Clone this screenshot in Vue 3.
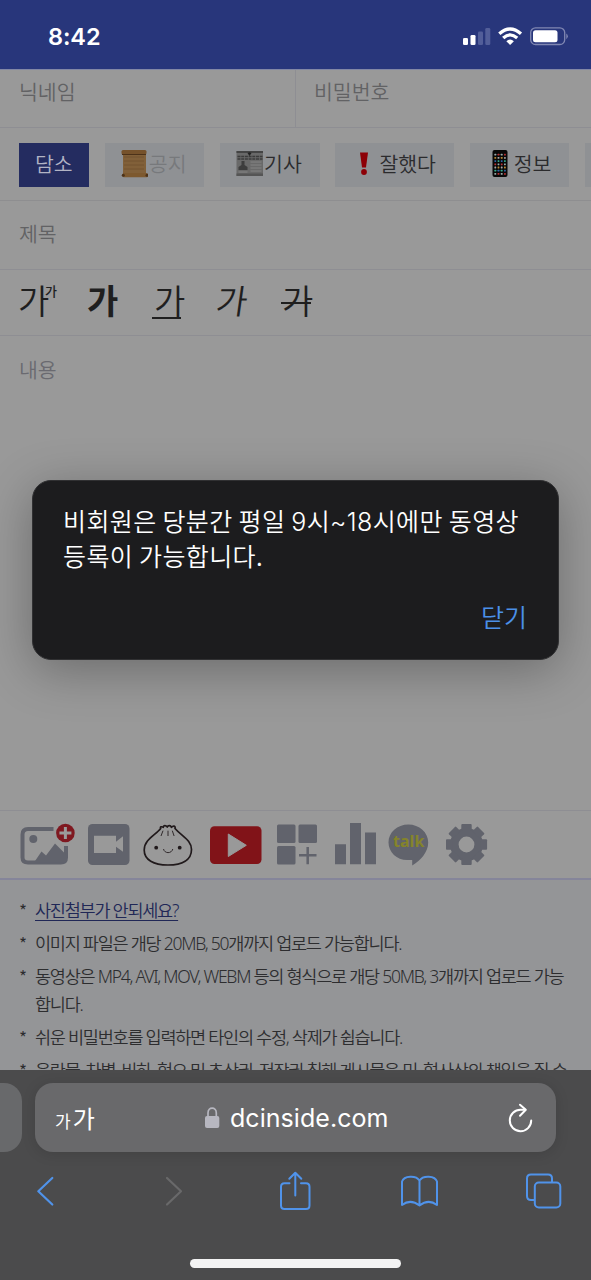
<script setup>
const gearTeeth = [0, 45, 90, 135, 180, 225, 270, 315]
const notices = [
  { text: '사진첨부가 안되세요?', link: true },
  { text: '이미지 파일은 개당 20MB, 50개까지 업로드 가능합니다.' },
  { text: '동영상은 MP4, AVI, MOV, WEBM 등의 형식으로 개당 50MB, 3개까지 업로드 가능', more: '합니다.' },
  { text: '쉬운 비밀번호를 입력하면 타인의 수정, 삭제가 쉽습니다.' },
  { text: '음란물, 차별, 비하, 혐오 및 초상권, 저작권 침해 게시물은 민, 형사상의 책임을 질 수' },
]
const leds = []
const ledColors = ['#9aa', '#3a8', '#a9a9a9', '#b33', '#36a', '#b83']
for (let r = 0; r < 7; r++) for (let c = 0; c < 4; c++) leds.push({ x: 494.4 + c * 3.2, y: 153.8 + r * 3.2, f: ledColors[(r * 5 + c * 3) % 6] })
</script>

<template>
  <div class="phone">
    <header class="status">
      <span class="clock">8:42</span>
      <svg class="signals" width="106" height="20" viewBox="463 27 106 20">
        <rect x="463" y="38" width="5" height="7" rx="1.3" fill="#fff" />
        <rect x="470.5" y="35" width="5" height="10" rx="1.3" fill="#fff" />
        <rect x="478" y="31.500" width="5" height="13.500" rx="1.3" fill="#525e99" />
        <rect x="485.300" y="28" width="5" height="17" rx="1.3" fill="#525e99" />
        <g fill="none" stroke="#fff" stroke-width="3.300">
          <path d="M499.300 33.700Q510 24.200 521 33.700" />
          <path d="M503.200 38Q510 31.700 517.200 38" />
        </g>
        <path d="M506.300 41.300Q510.100 37.800 513.900 41.300L510.100 44.900Z" fill="#fff" />
        <rect x="530.700" y="27.800" width="34" height="16.700" rx="4.800" fill="none" stroke="#8087b2" stroke-width="1.300" />
        <rect x="533" y="30.200" width="24.500" height="12" rx="2.500" fill="#fff" />
        <path d="M566.300 33.500q3 2.700 0 5.700z" fill="#8087b2" />
      </svg>
    </header>

    <main class="page">
      <div class="login">
        <div class="field">닉네임</div>
        <div class="field second">비밀번호</div>
      </div>
      <nav class="tabs">
        <span class="tab on">담소</span>
        <span class="tab muted">
          <svg width="27" height="30" viewBox="121 149 27 30">
            <path d="M123 152h23v24h-23z" fill="#816039" />
            <path d="M124 157h20M124 161h20M124 165h20M124 169h20" stroke="#735330" stroke-width="1" />
            <rect x="121.500" y="150" width="25" height="4.500" rx="1.500" fill="#76522b" />
            <path d="M122 154.500h24" stroke="#4c3219" />
            <rect x="122.500" y="173" width="25.500" height="4.300" rx="1.500" fill="#7d592f" />
            <circle cx="123.300" cy="175.300" r="1.500" fill="#4c3219" /><circle cx="147" cy="175.300" r="1.500" fill="#4c3219" />
          </svg>공지</span>
        <span class="tab">
          <svg width="27" height="30" viewBox="236.500 149 27 30">
            <rect x="237" y="151" width="27" height="25" fill="#696969" />
            <path d="M237 151h27v2h-27z" fill="#444" />
            <path d="M238 156.500h25M238 159h25" stroke="#3b3b3b" stroke-width="1.500" stroke-dasharray="3 .700" />
            <path d="m248 153 2-.7 2 .7-2 3z" fill="#222" />
            <path d="M239 170v-3l3-2v-4h3v4l3 2v3z" fill="#3d3d3d" />
            <path d="M251 162h11M251 165h11M251 168h11M251 171h11M239 172h9" stroke="#858585" />
            <path d="M237 173.500h27v2.500h-27z" fill="#555" />
          </svg>기사</span>
        <span class="tab wide">
          <svg width="27" height="30" viewBox="352 149 27 30">
            <path d="M361 152.500h8l-2 15h-4z" fill="#8d0007" /><circle cx="365" cy="172" r="2.900" fill="#8d0007" />
          </svg>잘했다</span>
        <span class="tab">
          <svg width="27" height="30" viewBox="486.500 149 27 30">
            <rect x="493" y="150" width="15" height="27" rx="2" fill="#080808" />
            <rect v-for="(l, i) in leds" :key="i" :x="l.x + .5" :y="l.y" width="1.800" height="1.800" rx=".400" :fill="l.f" />
          </svg>정보</span>
        <span class="tab stub"></span>
      </nav>
      <div class="subject">제목</div>
      <div class="format">
        <span class="f size">가<small>가</small></span>
        <span class="f bold">가</span>
        <span class="f under">가</span>
        <span class="f ital">가</span>
        <span class="f strike">가</span>
      </div>
      <div class="content">내용</div>

      <div class="tools">
        <svg width="56" height="46" viewBox="20 821 56 46">
          <path d="M53.500 829H28q-5.500 0-5.500 5.500v23q0 5 5.500 5h33q5 0 5-5V846" fill="none" stroke="#61636c" stroke-width="4" />
          <circle cx="33.300" cy="839" r="4" fill="#61636c" />
          <path d="M34 862.500 41.500 851.500 46 855.500 55 843.500 66 854.500V862.500Z" fill="#61636c" />
          <circle cx="65.400" cy="833" r="9.300" fill="#7f1820" />
          <path d="M65.400 827v12M59.400 833h12" stroke="#9b9b9b" stroke-width="3" />
        </svg>
        <svg class="video" width="42" height="46" viewBox="88 821 42 46">
          <rect x="88" y="824" width="41.500" height="41" rx="4.500" fill="#61636c" />
          <path d="M94 835.700h22v6l7-5.500v15.500l-7-5v6.300H94z" fill="#999" />
        </svg>
        <svg class="bun" width="50" height="46" viewBox="143 821 50 46">
          <path d="M160.700 828.500c-5 6.500-16.500 11-16.500 21.500 0 10 9.500 15 23.800 15s23.500-5 23.500-15.500c0-9.500-9.500-13-16.500-21 .800-3-2-3-3.500-1.200-1-2.300-3.500-2.300-4.200-.300-1.500-2-4-1.800-4 .300-2-1-3.500-.500-2.600 1.200Z" fill="none" stroke="#20191b" stroke-width="1.700" stroke-linejoin="round" />
          <path d="M163 830.700 161 836M168 830.700V836M172.300 830.700l1.800 5.300M163.500 849c1 4.700 8 5 9.300 0" fill="none" stroke="#30292b" stroke-width="1" />
          <circle cx="156.200" cy="847.700" r="1.900" fill="#20191b" /><circle cx="179.700" cy="847.700" r="1.900" fill="#20191b" />
        </svg>
        <svg class="tube" width="52" height="46" viewBox="210 821 52 46">
          <rect x="210" y="826.300" width="51.500" height="37.700" rx="4.500" fill="#811318" />
          <path d="M228.300 834v22.500l18-11.200z" fill="#999" stroke="#999" stroke-linejoin="round" />
        </svg>
        <svg class="blocks" width="40" height="46" viewBox="277 821 40 46" fill="#61636c">
          <rect x="277" y="824.500" width="18.500" height="18.500" rx="1.500" /><rect x="298.500" y="824.500" width="18.500" height="18.500" rx="1.500" /><rect x="277" y="846" width="18.500" height="18.500" rx="1.500" />
          <path d="M307.700 847v17.300M299 855.300h17.500" stroke="#61636c" stroke-width="2.500" />
        </svg>
        <svg class="chart" width="42" height="46" viewBox="335 821 42 46" fill="#61636c">
          <path d="M335 844.300h11V864.200H335zM350 823h11V864.200H350zM365 832.500h11V864.200H365z" />
        </svg>
        <div class="talk">
          <svg width="41" height="46" viewBox="388 821 41 46">
            <path d="M408.300 824.500c-11 0-19.800 7.800-19.800 18 0 9.700 8.300 17.500 18.700 17.500h5v5.500c8-5 16-13 16-23 0-10.200-8.900-18-19.900-18Z" fill="#61636c" />
          </svg><b>talk</b>
        </div>
        <svg class="gear" width="42" height="46" viewBox="446 821 42 46" fill="#61636c">
          <circle cx="466.500" cy="844.500" r="12.200" fill="none" stroke="#61636c" stroke-width="8.600" />
          <rect v-for="a in gearTeeth" :key="a" x="461.300" y="823.900" width="10.400" height="7" rx="1" :transform="`rotate(${a} 466.500 844.500)`" />
        </svg>
      </div>

      <ul class="notices">
        <li v-for="(n, i) in notices" :key="i">
          <span class="star">*</span>
          <span :class="['txt', 'n' + i, { link: n.link }]">{{ n.text }}<template v-if="n.more"><br>{{ n.more }}</template></span>
        </li>
      </ul>
    </main>

    <footer class="safari">
      <div class="bar">
        <div class="prev"></div>
        <div class="address">
          <span class="aa"><small>가</small>가</span>
          <span class="host">
            <svg width="15" height="22" viewBox="205 1107 15 22">
              <rect x="205" y="1116" width="14.300" height="12" rx="2" fill="#b7b7c0" />
              <path d="M208 1116.500v-3.500c0-6.500 8.300-6.500 8.300 0v3.500" fill="none" stroke="#b7b7c0" stroke-width="1.700" />
            </svg>
            <span>dcinside.com</span>
          </span>
          <svg class="reload" width="26" height="30" viewBox="509 1102 26 30" fill="none" stroke="#fff" stroke-width="2" stroke-linecap="round" stroke-linejoin="round">
            <path d="M526 1108.800H521.700A10.700 10.700 0 1 0 532.200 1119.500" />
            <path d="M521 1103.700 526.800 1108.800 521 1114.700" />
          </svg>
        </div>
      </div>
      <div class="actions">
        <svg width="19" height="40" viewBox="36 1171.500 19 40" fill="none" stroke="#5093ea" stroke-width="2.200" stroke-linecap="round" stroke-linejoin="round"><path d="M52.300 1178.500 38.300 1191.700 52.300 1205" /></svg>
        <svg class="fwd" width="19" height="40" viewBox="164 1171.500 19 40" fill="none" stroke="#69696a" stroke-width="2.200" stroke-linecap="round" stroke-linejoin="round"><path d="M167 1178.500 181 1191.700 167 1205" /></svg>
        <svg class="share" width="32" height="40" viewBox="279 1171 32 40" fill="none" stroke="#5093ea" stroke-width="2" stroke-linecap="round" stroke-linejoin="round">
          <path d="M289.500 1183.300h-5q-3.500 0-3.500 3.500v18.700q0 3.500 3.500 3.500h21.500q3.500 0 3.500-3.500v-18.700q0-3.500-3.500-3.500h-5M295.300 1195.500V1173M289.300 1178.700l6-6 6 6" />
        </svg>
        <svg class="book" width="40" height="40" viewBox="399 1171.500 40 40" fill="none" stroke="#5093ea" stroke-width="2" stroke-linejoin="round">
          <path d="M419.500 1181v25q-9-7-17.500-.500V1182c2-6 14-6.500 17.500-1 3.500-5.500 15.500-5 17.500 1v23.500q-8.500-6.500-17.500.500" />
        </svg>
        <svg class="pages" width="37" height="40" viewBox="525 1171.500 37 40" fill="none" stroke="#5093ea" stroke-width="2">
          <path d="M534.500 1200.500H531q-4 0-4-4v-17.500q0-4 4-4h17q4 0 4 4v3.500" />
          <rect x="534.800" y="1183" width="25.500" height="25" rx="4" />
        </svg>
      </div>
      <div class="home"></div>
    </footer>

    <section class="dialog">
      <p>비회원은 당분간 평일 <i>9</i>시<i>~18</i>시에만 동영상<br>등록이 가능합니다.</p>
      <button>닫기</button>
    </section>
  </div>
</template>

<style>
body { margin: 0; background: #999; }
</style>
<style scoped>
* { box-sizing: border-box; }
svg { display: block; flex: none; }
.phone { position: relative; width: 591px; height: 1280px; overflow: hidden; display: flex; flex-direction: column; background: #999; font-family: "Noto Sans CJK KR", "Noto Sans", sans-serif; font-weight: 350; color: #2d2d2f; }
.status { flex: none; height: 69px; background: #28367b; display: flex; justify-content: space-between; padding: 0 22px 0 48px; }
.clock { font: 600 23.500px/30px Inter, sans-serif; color: #fff; margin-top: 22px; letter-spacing: -.1px; }
.signals { margin-top: 27px; }
.page { height: 1001px; flex: none; overflow: hidden; }
.login { display: flex; height: 59px; border-top: 1px solid #8287a5; border-bottom: 1px solid #8e8e93; color: #626264; }
.field { width: 295px; padding-left: 19px; font-size: 20.500px; line-height: 42px; }
.second { width: 296px; padding-left: 18px; border-left: 1px solid #8e8e93; }
.tabs { display: flex; gap: 15.800px; height: 73px; padding: 15px 0 0 19px; border-bottom: 1px solid #8e8e90; overflow: hidden; }
.tab { flex: none; width: 99.500px; height: 44px; background: #8f9194; display: flex; align-items: center; padding: 0 0 4px 16px; font-size: 20.500px; line-height: 40px; color: #2b2b2d; white-space: nowrap; }
.tab svg { margin-right: 1px; margin-top: 2px; }
.tab.on { width: 70px; background: #242c60; color: #b2b4c5; }
.tab.muted { color: #77797c; }
.tab.wide { width: 118.500px; }
.subject { height: 69px; padding-left: 19px; font-size: 20.500px; line-height: 65px; color: #626264; border-bottom: 1px solid #8e8e93; }
.format { height: 66px; display: flex; padding-left: 18px; border-bottom: 1px solid #8e8e93; color: #1f1f1f; font-size: 34px; line-height: 60px; }
.f { width: 68px; position: relative; flex: none; }
.size small { position: absolute; left: 27px; top: -9px; font-size: 13px; line-height: 60px; font-weight: 500; }
.bold { font-weight: 700; padding-left: 1px; }
.under::after, .strike::after { content: ""; position: absolute; left: -2px; top: 47px; width: 29px; height: 2px; background: #1f1f1f; }
.ital { width: 60px; transform: translateX(-6px) skewX(-8deg); }
.strike::after { top: 32px; width: 30px; left: -1px; }
.content { height: 475px; padding: 1px 0 0 19px; font-size: 20.500px; line-height: 64px; color: #6a6a70; border-bottom: 1px solid #8e8e93; }
.tools { height: 67px; display: flex; padding: 10px 0 0 20px; }
.video { margin-left: 12px; }
.bun { margin-left: 13px; }
.tube { margin-left: 17px; }
.blocks { margin-left: 15px; }
.chart { margin-left: 18px; }
.talk { margin-left: 11px; position: relative; }
.talk b { position: absolute; left: 5px; top: 10px; font: 700 16px/20px "Open Sans", sans-serif; color: #85842a; }
.gear { margin-left: 17px; }
.notices { list-style: none; margin: 0; padding: 16px 0 0 19px; height: 193px; border-top: 2px solid #85859a; background: #949597; overflow: hidden; }
.notices li { display: flex; margin-bottom: 5px; font-size: 17.500px; line-height: 28px; white-space: nowrap; }
.star { width: 16px; padding-top: 1px; height: 28px; }
.txt { letter-spacing: -1.250px; font-family: "Noto Sans", "Noto Sans CJK KR", sans-serif; }
.link { color: #202756; text-decoration: underline; text-underline-offset: 3px; text-decoration-thickness: 1px; }
.safari { height: 210px; background: #4b4b4c; flex: none; padding-top: 13px; }
.bar { display: flex; gap: 13px; height: 69px; }
.prev { width: 22px; background: #68696b; border-radius: 0 18px 18px 0; }
.address { width: 521px; background: #69696b; border-radius: 18px; box-shadow: 0 2px 14px rgba(0, 0, 0, .13); display: flex; align-items: center; padding: 0 22px 0 20px; color: #fff; }
.aa { width: 150px; font-size: 24px; font-weight: 400; }
.aa small { font-size: 17px; margin-right: 2px; }
.host { display: flex; align-items: center; gap: 10px; font: 400 25px/34px Inter, sans-serif; letter-spacing: .05px; }
.reload { margin-left: auto; }
.actions { display: flex; margin-top: 19px; padding-left: 36px; }
.fwd { margin-left: 109px; }
.share { margin-left: 96px; }
.book { margin-left: 88px; }
.pages { margin-left: 86px; }
.home { width: 211px; height: 9px; border-radius: 5px; background: #f3f3f3; margin: 48px auto 0 190px; }
.dialog { position: absolute; left: 32px; top: 480px; width: 527px; height: 180px; border-radius: 19px; background: #1c1c1e; border: 1px solid #303032; padding: 22px 30px; color: #fff; box-shadow: 0 10px 50px rgba(0, 0, 0, .3); display: flex; flex-direction: column; }
.dialog p { margin: 0; font-size: 25px; line-height: 35px; white-space: nowrap; letter-spacing: .38px; }
.dialog i { font-style: normal; font-family: Inter, sans-serif; font-weight: 350; line-height: 1; }
.dialog button { align-self: flex-end; margin: 24px 1px 0 0; padding: 0; border: 0; background: none; color: #4b90e8; font: 350 25px/38px "Noto Sans CJK KR", sans-serif; }
</style>
